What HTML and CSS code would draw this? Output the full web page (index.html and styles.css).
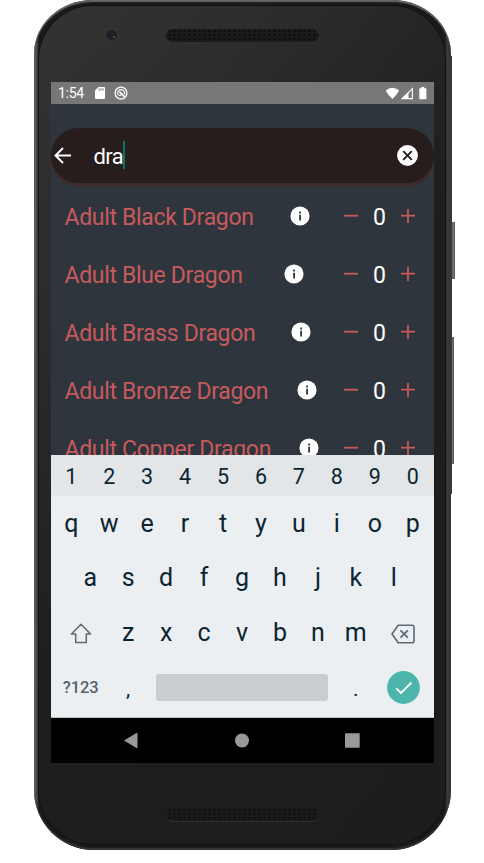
FILE: index.html
```
<!DOCTYPE html>
<html lang="en">
<head>
<meta charset="utf-8">
<title>Monster search</title>
<link rel="stylesheet" href="styles.css">
</head>
<body>
<svg class="defs" width="0" height="0" aria-hidden="true">
  <symbol id="info" viewBox="0 0 20 20"><circle cx="10" cy="10" r="9.6" fill="#fff"/><path d="M9.200 8.800h1.800v5.700H9.200zM9.200 5.400h1.800v2H9.200z" fill="#2f353d"/></symbol>
  <symbol id="minus" viewBox="0 0 14 14"><path d="M0 6.7h14" stroke="#c75a5c" stroke-width="1.8"/></symbol>
  <symbol id="plus" viewBox="0 0 14 14"><path d="M0 6.7h14M7 0v14" stroke="#c75a5c" stroke-width="1.8"/></symbol>
</svg>
<div class="device">
  <i class="button power"></i>
  <i class="button volume"></i>
  <i class="button base"></i>
  <div class="body">
    <div class="face">
      <div class="top"><i class="camera"></i><i class="speaker"></i></div>
      <main class="screen">
        <header class="status">
          <span class="time">1:54</span>
          <svg class="sd" width="10" height="12" viewBox="0 0 10 12"><path d="M3.4 0H9q1 0 1 1v10q0 1-1 1H1q-1 0-1-1V3.4z" fill="#fff"/><path d="M4 1.3v2.3M6 1.3v2.3M8 1.3v2.3" stroke="#777"/></svg>
          <svg class="debug" width="14" height="14" viewBox="0 0 14 14"><g fill="none" stroke="#fff"><circle cx="7" cy="7" r="5.9" stroke-width="1.3"/><path d="M4 8.800a3.500 3.500 0 1 1 6.300-.3" stroke-width="1.100"/><path d="M5.500 5.800l5 4.800" stroke-width="1.800"/><path d="M4.300 9.300h3" stroke-width="1.200"/></g></svg>
          <span class="grow"></span>
          <svg class="signals" width="42" height="13" viewBox="0 0 42 13"><path d="M.8 3.300Q7.300-2 14 3.300Q13.500 6 7.400 12.100Q1.300 6 .8 3.300z" fill="#fff"/><path d="M27.400 1.600v10H17.300z" fill="none" stroke="#fff" stroke-width="1.100"/><path d="M16 12.100L23.500 5v7.100z" fill="#fff"/><path d="M36.300 0h3v1.200h1.400q.7 0 .7.700v9.700q0 .7-.7.700h-5.700q-.7 0-.7-.7V1.900q0-.7.700-.7h1.300z" fill="#fff"/></svg>
        </header>
        <section class="content">
          <div class="search">
            <svg class="back" width="17" height="17" viewBox="0 0 17 17"><path d="M17 8.500H1.500M9 1L1.500 8.500L9 16" fill="none" stroke="#fff" stroke-width="1.900"/></svg>
            <span class="query">dra</span><i class="caret"></i>
            <span class="grow"></span>
            <svg class="clear" width="21" height="21" viewBox="0 0 21 21"><circle cx="10.500" cy="10.500" r="10.400" fill="#fff"/><path d="M6.200 6.200l8.600 8.600M14.800 6.200l-8.600 8.600" stroke="#271d1c" stroke-width="1.900"/></svg>
          </div>
          <ul class="list">
            <li><span class="name">Adult Black Dragon</span><svg class="info"><use href="#info"/></svg><span class="counter"><svg><use href="#minus"/></svg><b>0</b><svg><use href="#plus"/></svg></span></li>
            <li><span class="name">Adult Blue Dragon</span><svg class="info"><use href="#info"/></svg><span class="counter"><svg><use href="#minus"/></svg><b>0</b><svg><use href="#plus"/></svg></span></li>
            <li><span class="name">Adult Brass Dragon</span><svg class="info"><use href="#info"/></svg><span class="counter"><svg><use href="#minus"/></svg><b>0</b><svg><use href="#plus"/></svg></span></li>
            <li><span class="name">Adult Bronze Dragon</span><svg class="info"><use href="#info"/></svg><span class="counter"><svg><use href="#minus"/></svg><b>0</b><svg><use href="#plus"/></svg></span></li>
            <li><span class="name">Adult Copper Dragon</span><svg class="info"><use href="#info"/></svg><span class="counter"><svg><use href="#minus"/></svg><b>0</b><svg><use href="#plus"/></svg></span></li>
          </ul>
        </section>
        <section class="keyboard">
          <div class="keys digits"><span>1</span><span>2</span><span>3</span><span>4</span><span>5</span><span>6</span><span>7</span><span>8</span><span>9</span><span>0</span></div>
          <div class="keys"><span>q</span><span>w</span><span>e</span><span>r</span><span>t</span><span>y</span><span>u</span><span>i</span><span>o</span><span>p</span></div>
          <div class="keys"><span>a</span><span>s</span><span>d</span><span>f</span><span>g</span><span>h</span><span>j</span><span>k</span><span>l</span></div>
          <div class="keys">
            <span class="wide"><svg class="shift" width="22" height="21" viewBox="0 0 22 21"><path d="M11 1.300L1.400 11H5.700v8.600H16.300V11h4.300z" fill="none" stroke="#5b6a73" stroke-width="1.500" stroke-linejoin="round"/></svg></span>
            <span>z</span><span>x</span><span>c</span><span>v</span><span>b</span><span>n</span><span>m</span>
            <span class="wide"><svg class="del" width="24" height="20" viewBox="0 0 24 20"><path d="M7.200 1.300H21q2 0 2 2v13.400q0 2-2 2H7.200L1 10z" fill="none" stroke="#5b6a73" stroke-width="1.600" stroke-linejoin="round"/><path d="M9.500 6.300l7.400 7.400M16.900 6.300l-7.400 7.400" stroke="#5b6a73" stroke-width="1.800"/></svg></span>
          </div>
          <div class="keys bottom">
            <span class="wide mode">?123</span><span class="punct">,</span><span class="space"><i></i></span><span class="punct">.</span>
            <span class="wide"><svg class="done" width="33" height="33" viewBox="0 0 33 33"><circle cx="16.500" cy="16.500" r="16.400" fill="#4db6ac"/><path d="M9.300 17.300l4.700 4.700L24.500 11.500" fill="none" stroke="#fff" stroke-width="1.800"/></svg></span>
          </div>
        </section>
        <nav class="nav">
          <svg width="383" height="45" viewBox="0 0 383 45" fill="#999"><path d="M73 22.500L85.500 15q1-.4 1 .7v13.600q0 1.100-1 .7z"/><circle cx="191" cy="22.500" r="7"/><rect x="294" y="15.300" width="14.700" height="14.400" rx=".8"/></svg>
        </nav>
      </main>
      <div class="chin"><i class="speaker"></i></div>
    </div>
  </div>
</div>
</body>
</html>
```
FILE: styles.css
```
* { box-sizing: border-box; }
body {
  margin: 0;
  background: #fff;
  font-family: Roboto, "Liberation Sans", sans-serif;
  overflow: hidden;
}
svg { display: block; flex: none; }
.defs { position: absolute; }
.grow { flex: 1; }

/* Handset */
.device { position: relative; width: 418px; height: 851px; margin-left: 34px; }
.button { position: absolute; background: linear-gradient(90deg, #333, #777 70%, #444); }
.power { left: 416px; top: 222px; width: 5px; height: 57px; }
.volume { left: 416px; top: 337px; width: 4px; height: 127px; }
.base { left: 415px; top: 56px; width: 3px; height: 438px; background: #3a393a; }
.body {
  position: relative;
  width: 417px;
  height: 850px;
  padding: 6px 5px 6px 5px;
  border-radius: 59px 59px 60px 60px / 54px 54px 60px 60px;
  background: linear-gradient(90deg, #666 0, #444 3px, #1a1a1a 5px, #1a1a1a 411px, #3c3b3c 413px, #343334 416px);
  box-shadow: inset 0 2px 1px #666, inset 0 -2px 1px #333;
}
.face {
  width: 406px;
  height: 838px;
  padding: 0 12px;
  border-radius: 54px;
  background: linear-gradient(130deg, #343334 0, #2c2c2c 22%, #1e1e1e 52%, #1d1d1e 100%);
  box-shadow: 0 0 0 1px #111;
}
.top { height: 76px; padding: 21px 0 0 52px; display: flex; align-items: flex-start; }
.camera {
  width: 16px; height: 16px; border-radius: 50%;
  background: radial-gradient(circle at 55% 50%, #201e28 0 2px, #1e1c22 4px, #333132 6px);
}
.camera::after {
  content: ""; display: block; width: 2px; height: 2px; margin: 9px 0 0 10px;
  border-radius: 50%; background: #705060;
}
.speaker {
  width: 153px; height: 13px; border-radius: 7px;
  background: radial-gradient(circle, #0c0c0c 0 .8px, transparent 1.4px) 1px 0 / 5px 4px #1a1a1a;
  box-shadow: 0 1px 0 #303030;
}
.top .speaker { margin: 2px 0 0 47px; }
.chin { padding: 45px 0 0 115px; }
.chin .speaker { display: block; }

/* Screen */
.screen { width: 383px; height: 681px; background: #2f353d; display: flex; flex-direction: column; }
.status {
  height: 22px; flex: none; padding: 0 7px;
  display: flex; align-items: center;
  background: #777; color: #fff; font-size: 14px; letter-spacing: -.3px;
}
.time { width: 37px; }
.debug { margin-left: 9px; }
.content { height: 351px; overflow: hidden; padding-top: 23.500px; }
.search {
  height: 55.500px; padding: 0 16px 0 3px; border-radius: 28px;
  display: flex; align-items: center;
  background: #271d1c; box-shadow: 0 4px 0 #3a2c2e;
  color: #fff; font-size: 22px; letter-spacing: -.6px;
}
.query { margin: 3px 0 0 22.500px; }
.caret { width: 2px; height: 28px; background: #00796b; }
.list { list-style: none; margin: 4px 0 0; padding: 0; }
.list li {
  height: 58px; padding: 0 19px 0 13.500px;
  display: flex; align-items: center; justify-content: space-between;
}
.name { color: #c75a5c; font-size: 23px; letter-spacing: -.33px; padding-top: 2px; }
.info { width: 22px; height: 20px; padding-left: 2px; }
.counter { display: flex; align-items: center; justify-content: space-between; width: 71px; color: #fff; }
.counter svg { width: 14px; height: 14px; }
.counter b { font-weight: 400; font-size: 23px; padding-top: 2px; }

/* Keyboard */
.keyboard { height: 263px; flex: none; background: #ebeff2; border-bottom: 1px solid #b9c4c0; color: #0b2530; }
.keys { height: 54.600px; padding: 0 1px 0 0; display: flex; justify-content: center; align-items: center; font-size: 25px; }
.keys > span { width: 37.950px; flex: none; display: flex; justify-content: center; }
.keys > .wide { width: 56.925px; }
.digits { height: 41px; padding-top: 2px; background: #e3e6e9; font-size: 21.500px; }
.shift { margin-top: 2px; }
.del { margin-top: 3px; }
.keys > .mode { color: #52636c; font-size: 16.500px; font-weight: 500; letter-spacing: -.1px; }
.keys > .space { width: 189.750px; }
.space i { width: 171.500px; height: 27px; border-radius: 3px; background: #c9cdd0; }
.punct { font-size: 21px; padding-top: 3px; }
.nav { height: 45px; background: #000; }
```
